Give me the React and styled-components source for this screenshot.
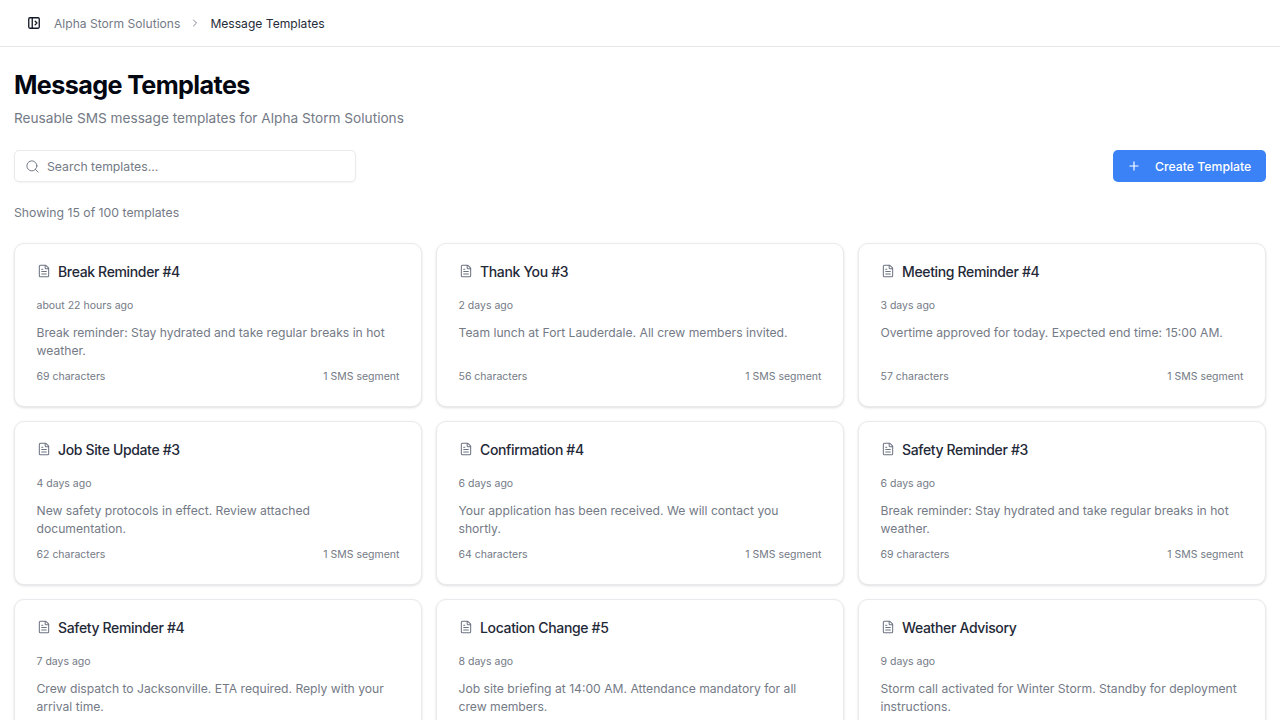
import styled, { createGlobalStyle } from "styled-components";
import { ChevronRight, FileText, PanelLeftOpen, Plus, Search } from "lucide-react";

const templates = [
  { title: "Break Reminder #4", age: "about 22 hours ago", body: "Break reminder: Stay hydrated and take regular breaks in hot weather.", chars: 69 },
  { title: "Thank You #3", age: "2 days ago", body: "Team lunch at Fort Lauderdale. All crew members invited.", chars: 56 },
  { title: "Meeting Reminder #4", age: "3 days ago", body: "Overtime approved for today. Expected end time: 15:00 AM.", chars: 57 },
  { title: "Job Site Update #3", age: "4 days ago", body: "New safety protocols in effect. Review attached documentation.", chars: 62 },
  { title: "Confirmation #4", age: "6 days ago", body: "Your application has been received. We will contact you shortly.", chars: 64 },
  { title: "Safety Reminder #3", age: "6 days ago", body: "Break reminder: Stay hydrated and take regular breaks in hot weather.", chars: 69 },
  { title: "Safety Reminder #4", age: "7 days ago", body: "Crew dispatch to Jacksonville. ETA required. Reply with your arrival time.", chars: 74 },
  { title: "Location Change #5", age: "8 days ago", body: "Job site briefing at 14:00 AM. Attendance mandatory for all crew members.", chars: 73 },
  { title: "Weather Advisory", age: "9 days ago", body: "Storm call activated for Winter Storm. Standby for deployment instructions.", chars: 75 },
];

export default function App() {
  return (
    <>
      <GlobalStyle />
      <Header>
        <SidebarToggle>
          <PanelLeftOpen size={14} strokeWidth={2.25} />
        </SidebarToggle>
        <Crumb>Alpha Storm Solutions</Crumb>
        <CrumbSeparator>
          <ChevronRight size={12} strokeWidth={1.75} />
        </CrumbSeparator>
        <Crumb $current>Message Templates</Crumb>
      </Header>
      <Main>
        <Title>Message Templates</Title>
        <Subtitle>Reusable SMS message templates for Alpha Storm Solutions</Subtitle>
        <Toolbar>
          <SearchBox>
            <Search size={15} strokeWidth={1.5} color="#6b7280" />
            <SearchInput placeholder="Search templates..." />
          </SearchBox>
          <CreateButton>
            <Plus size={14} strokeWidth={2} />
            Create Template
          </CreateButton>
        </Toolbar>
        <Count>Showing 15 of 100 templates</Count>
        <Grid>
          {templates.map((t) => (
            <Card key={t.title}>
              <CardTitle>
                <FileText size={14} strokeWidth={1.75} color="#6b7280" />
                <span>{t.title}</span>
              </CardTitle>
              <Meta>{t.age}</Meta>
              <Body>{t.body}</Body>
              <CardFooter>
                <span>{t.chars} characters</span>
                <span>1 SMS segment</span>
              </CardFooter>
            </Card>
          ))}
        </Grid>
      </Main>
    </>
  );
}

const GlobalStyle = createGlobalStyle`
  html, body {
    margin: 0;
    height: 720px;
    overflow: hidden;
    background: #fff;
    font-family: Inter, "Liberation Sans", sans-serif;
    color: #111827;
  }
  * {
    box-sizing: border-box;
  }
`;

const Header = styled.header`
  display: flex;
  align-items: center;
  height: 47px;
  padding: 0 27px;
  border-bottom: 1px solid #e5e7eb;
`;

const SidebarToggle = styled.div`
  display: flex;
  color: #111827;
  margin-right: 13px;
`;

const Crumb = styled.span`
  font-size: 12.1px;
  color: ${(p) => (p.$current ? "#262c38" : "#747a86")};
`;

const CrumbSeparator = styled.span`
  display: flex;
  margin: 0 9px;
  color: #6b7280;
`;

const Main = styled.main`
  padding: 21px 14px 14px;
`;

const Title = styled.h1`
  margin: 0;
  font-size: 25.2px;
  line-height: 35px;
  font-weight: 700;
  letter-spacing: -0.63px;
  color: #030712;
`;

const Subtitle = styled.p`
  margin: 5px 0 0;
  font-size: 13.65px;
  line-height: 21px;
  color: #747a86;
`;

const Toolbar = styled.div`
  display: flex;
  justify-content: space-between;
  align-items: center;
  margin-top: 21px;
`;

const SearchBox = styled.label`
  display: flex;
  align-items: center;
  gap: 7px;
  width: 342px;
  height: 32px;
  padding: 0 10px;
  border: 1px solid #e8eaed;
  border-radius: 5px;
  box-shadow: 0 1px 2px rgba(0, 0, 0, 0.05);
`;

const SearchInput = styled.input`
  flex: 1;
  border: 0;
  outline: 0;
  padding: 0;
  font: inherit;
  font-size: 12.25px;
  color: #111827;
  &::placeholder {
    color: #747a86;
    opacity: 1;
  }
`;

const CreateButton = styled.button`
  display: flex;
  align-items: center;
  gap: 14px;
  width: 153px;
  height: 32px;
  padding: 0 14px;
  border: 0;
  border-radius: 5px;
  background: #3b82f6;
  color: #fff;
  font: inherit;
  font-size: 12.25px;
  font-weight: 500;
`;

const Count = styled.p`
  margin: 22px 0 0;
  font-size: 12.25px;
  line-height: 17.5px;
  color: #747a86;
`;

const Grid = styled.div`
  display: grid;
  grid-template-columns: repeat(3, 1fr);
  gap: 14px;
  margin-top: 21px;
`;

const Card = styled.article`
  height: 164px;
  padding: 19px 21.5px;
  border: 1px solid #e8eaed;
  border-radius: 10px;
  background: #fff;
  box-shadow: 0 1px 3px rgba(0, 0, 0, 0.1), 0 1px 2px -1px rgba(0, 0, 0, 0.1);
`;

const CardTitle = styled.h3`
  display: flex;
  align-items: center;
  gap: 7.5px;
  margin: 0;
  font-size: 14px;
  line-height: 17.5px;
  font-weight: 500;
  letter-spacing: -0.35px;
  color: #1f2937;
`;

const Meta = styled.div`
  margin-top: 19px;
  font-size: 10.5px;
  line-height: 14px;
  color: #747a86;
`;

const Body = styled.p`
  margin: 11px 0 0;
  min-height: 35px;
  font-size: 12.15px;
  line-height: 17.5px;
  color: #747a86;
`;

const CardFooter = styled.div`
  display: flex;
  justify-content: space-between;
  margin-top: 11px;
  font-size: 10.5px;
  line-height: 14px;
  color: #747a86;
`;
